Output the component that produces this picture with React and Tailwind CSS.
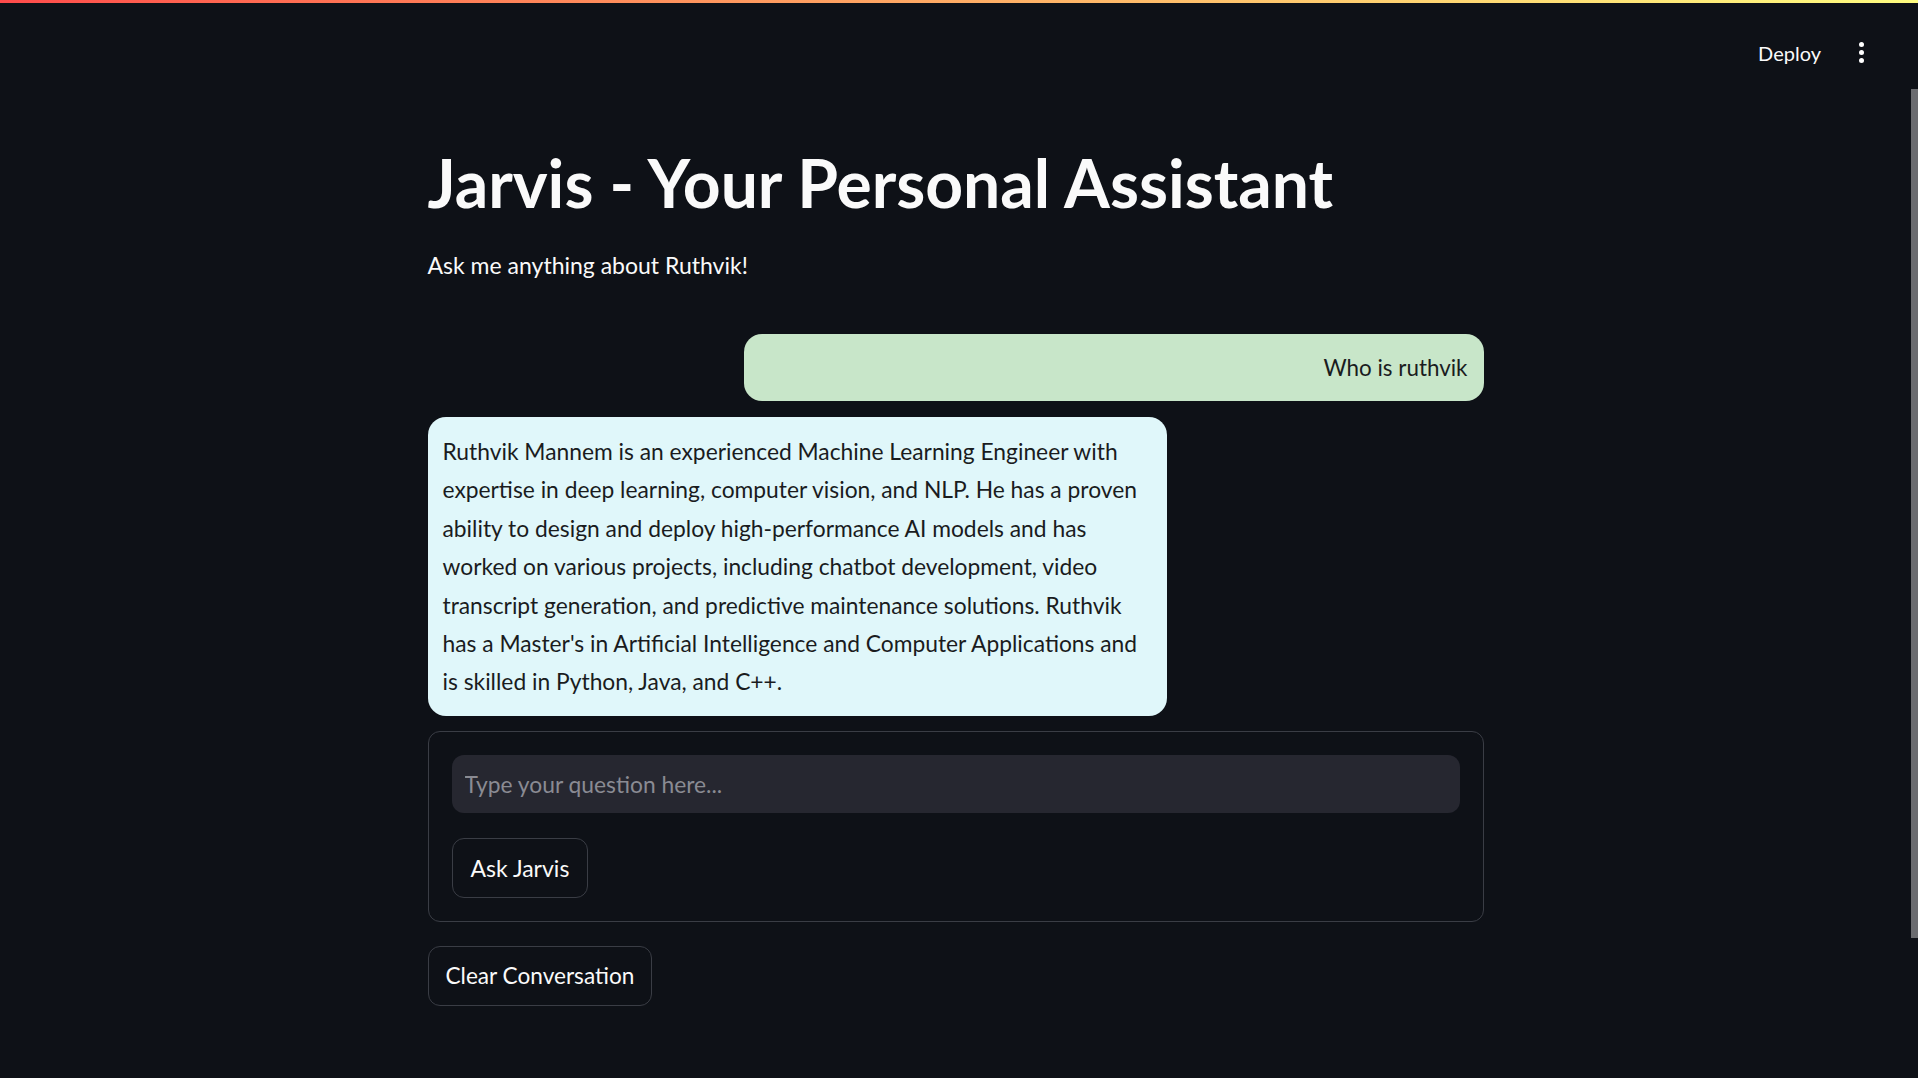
const answer =
  "Ruthvik Mannem is an experienced Machine Learning Engineer with expertise in deep learning, computer vision, and NLP. He has a proven ability to design and deploy high-performance AI models and has worked on various projects, including chatbot development, video transcript generation, and predictive maintenance solutions. Ruthvik has a Master's in Artificial Intelligence and Computer Applications and is skilled in Python, Java, and C++.";

export default function App() {
  return (
    <div className="relative min-h-screen bg-[#0e1117] font-['Lato',sans-serif] text-[#fafafa]">
      <div className="h-[3px] bg-linear-to-r from-[#ff4b4b] to-[#fffd80]" />

      <header className="flex h-[99px] items-center justify-end gap-[38px] pr-[54px]">
        <button className="text-[20px] text-[#fafafa]">Deploy</button>
        <span className="flex flex-col items-center gap-[3px]">
          <span className="h-[5px] w-[5px] rounded-full bg-white" />
          <span className="h-[5px] w-[5px] rounded-full bg-white" />
          <span className="h-[5px] w-[5px] rounded-full bg-white" />
        </span>
      </header>

      <div className="pr-[7px]">
        <main className="mx-auto w-[1056px]">
          <h1 className="mt-[41px] text-[66px] font-bold leading-[1.2]">
            Jarvis - Your Personal Assistant
          </h1>
          <p className="mt-[25px] text-[23px] leading-[1.6]">Ask me anything about Ruthvik!</p>

          <div className="mt-[50px] flex justify-end">
            <div className="flex h-[67px] w-[70%] items-center justify-end rounded-[18px] bg-[#c8e6c9] px-[16px] text-[22.4px] text-[#1a1c1e]">
              Who is ruthvik
            </div>
          </div>

          <div className="mt-[16px] flex justify-start">
            <div className="w-[70%] rounded-[18px] bg-[#e0f7fa] px-[15px] py-[15px] text-[22.8px] leading-[38.4px] text-[#1a1c1e]">
              {answer}
            </div>
          </div>

          <form className="mt-[15px] rounded-[12px] border border-[#3a3d45] p-[23px]">
            <input
              className="h-[58px] w-full rounded-[12px] bg-[#262730] px-[13px] text-[22.8px] text-[#fafafa] outline-none placeholder:text-[#8a8b93]"
              placeholder="Type your question here..."
            />
            <button
              type="button"
              className="mt-[25px] flex h-[60px] items-center rounded-[12px] border border-[#3a3d45] bg-[#0e1117] px-[18px] text-[23px] text-[#fafafa]"
            >
              Ask Jarvis
            </button>
          </form>

          <button className="mt-[24px] flex h-[60px] items-center rounded-[12px] border border-[#3a3d45] bg-[#0e1117] px-[17px] text-[22.6px] text-[#fafafa]">
            Clear Conversation
          </button>
          <div className="h-[73px]" />
        </main>
      </div>

      <div className="absolute right-0 top-[89px] h-[849px] w-[7px] bg-[#6b6c70]" />
    </div>
  );
}
